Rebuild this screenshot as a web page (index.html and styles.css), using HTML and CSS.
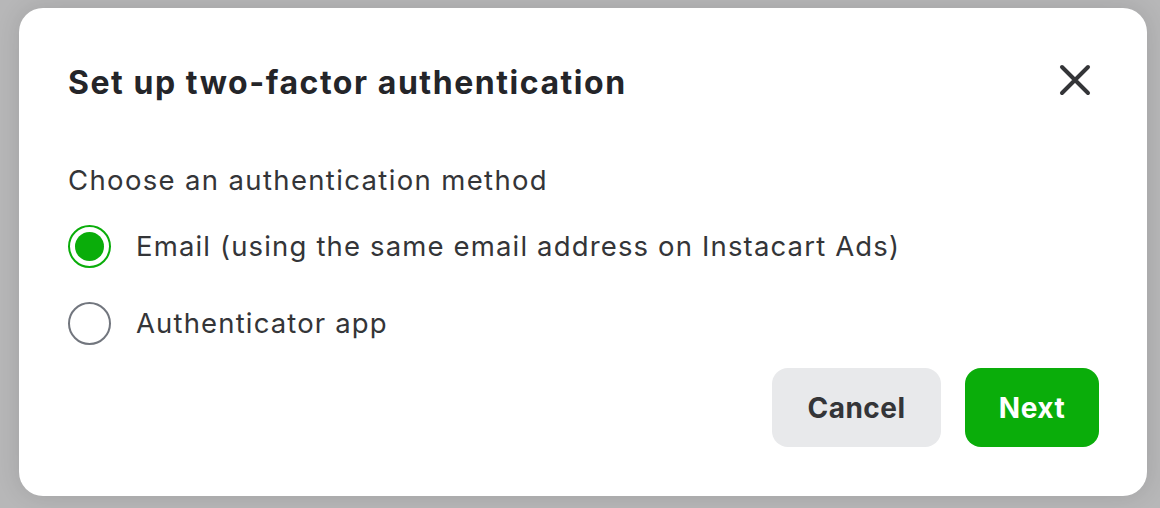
FILE: index.html
```html
<!DOCTYPE html>
<html>
<head>
<meta charset="utf-8">
<link rel="stylesheet" href="styles.css">
</head>
<body>
<div class="page">
  <div class="modal">
    <div class="header">
      <h1 class="title">Set up two-factor authentication</h1>
      <button class="close" aria-label="Close">
        <svg width="32" height="32" viewBox="0 0 32 32"><path d="M3 3L29 29M29 3L3 29" stroke="#343538" stroke-width="4" stroke-linecap="round"/></svg>
      </button>
    </div>
    <p class="prompt">Choose an authentication method</p>
    <div class="options">
      <label class="option"><span class="radio checked"><span class="dot"></span></span><span class="label">Email (using the same email address on Instacart Ads)</span></label>
      <label class="option"><span class="radio"></span><span class="label">Authenticator app</span></label>
    </div>
    <div class="actions">
      <button class="btn cancel">Cancel</button>
      <button class="btn next">Next</button>
    </div>
  </div>
</div>
</body>
</html>
```
FILE: styles.css
```css
html, body { margin: 0; padding: 0; }
body {
  width: 1160px; height: 508px; overflow: hidden;
  background: #b7b7b8;
  font-family: Inter, "Liberation Sans", sans-serif;
  color: #343538;
}
.page { padding: 8px 13px 0 19px; }
.modal {
  box-sizing: border-box;
  width: 1128px; height: 488px;
  background: #fff;
  border-radius: 24px;
  box-shadow: 0 0 24px rgba(0,0,0,0.12);
  padding: 46px 48px 0 49px;
  display: flex; flex-direction: column;
}
.header { display: flex; align-items: center; justify-content: space-between; height: 56px; }
.title { margin: 0; font-size: 32px; font-weight: 700; color: #242529; letter-spacing: 1.55px; }
.close { border: 0; background: none; padding: 0; width: 32px; height: 32px; margin-right: 8px; margin-top: -4px; display: flex; }
.prompt { margin: 54px 0 0; font-size: 27.5px; line-height: 32px; letter-spacing: 1.35px; }
.options { display: flex; flex-direction: column; gap: 33px; margin-top: 28px; }
.option { display: flex; align-items: center; gap: 25px; height: 44px; }
.radio {
  box-sizing: border-box; width: 43px; height: 43px; border-radius: 50%;
  border: 2px solid #72767e; display: flex; align-items: center; justify-content: center;
}
.radio.checked { border-color: #0aad0a; }
.dot { width: 29px; height: 29px; border-radius: 50%; background: #0aad0a; }
.label { font-size: 27.5px; letter-spacing: 1.15px; }
.actions { display: flex; justify-content: flex-end; gap: 24px; margin-top: 23px; }
.btn {
  border: 0; height: 79px; border-radius: 16px; font-family: inherit;
  font-size: 28px; font-weight: 700; padding: 0; cursor: pointer; letter-spacing: 0.5px;
}
.cancel { width: 169px; background: #e8e9eb; color: #343538; }
.next { width: 134px; background: #0aad0a; color: #fff; }
```
